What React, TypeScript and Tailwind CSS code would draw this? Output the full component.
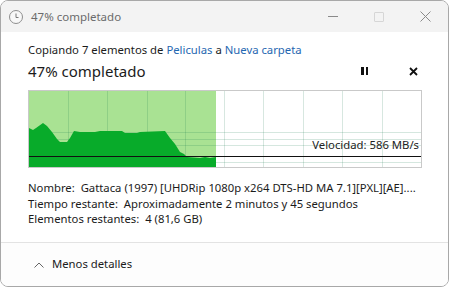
import React from 'react';

const FONT = { fontFamily: '"Noto Sans", "Open Sans", sans-serif' };

// velocity profile in chart-inner coordinates (392 x 76)
const speedPoints = [
  [0, 37], [4, 39], [7, 37], [14, 32], [18, 35], [23, 41], [28, 48], [31, 51],
  [38, 51], [41, 47], [45, 40], [51, 41], [66, 41], [71, 40], [93, 40],
  [96, 42], [108, 42], [111, 41], [136, 40], [141, 47], [146, 53], [151, 61],
  [155, 63], [158, 66], [171, 67], [176, 66], [181, 67], [187, 66], [187, 76], [0, 76],
];

const vLines = [39, 78, 118, 156, 195, 234, 274, 313, 353];
const hLines = [41, 48, 54, 71];

function SpeedChart() {
  const poly = speedPoints.map(([x, y]) => `${x},${y}`).join(' ');
  return (
    <div className="relative mt-[8px] h-[78px] w-[394px] border border-[#c9c9c9] bg-white">
      <svg width="392" height="76" viewBox="0 0 392 76" className="block">
        <rect x="0" y="0" width="187" height="76" fill="#a9e293" />
        {vLines.map((x) => (
          <line key={x} x1={x + 0.5} y1="0" x2={x + 0.5} y2="76" stroke="rgba(20,110,70,0.17)" strokeWidth="1" />
        ))}
        {hLines.map((y) => (
          <line key={y} x1="0" y1={y + 0.5} x2="392" y2={y + 0.5} stroke="rgba(20,120,80,0.18)" strokeWidth="1" />
        ))}
        <polygon points={poly} fill="#08ab2a" />
        <line x1="0" y1="65.5" x2="392" y2="65.5" stroke="#111" strokeWidth="1" />
      </svg>
      <span className="absolute right-[2px] top-[47px] text-[11.3px] leading-[14px] text-[#222]">
        Velocidad: 586 MB/s
      </span>
    </div>
  );
}

export default function App() {
  return (
    <div
      className="flex h-[287px] w-[449px] flex-col overflow-hidden rounded-[8px] border border-[#a8a8a8] bg-white"
      style={FONT}
    >
      {/* Title bar */}
      <div className="flex h-[31px] shrink-0 items-center bg-[#f3f3f3]">
        <svg width="16" height="16" viewBox="0 0 16 16" className="ml-[7px]">
          <circle cx="8" cy="8" r="6.5" fill="#f8f8f8" stroke="#8f8f8f" strokeWidth="1" />
          <path d="M8 4.5V8.5H10.5" fill="none" stroke="#7a7a7a" strokeWidth="1" />
        </svg>
        <span className="ml-[7px] text-[11.5px] text-[#6b6b6b]">47% completado</span>
        <div className="ml-auto flex h-full items-center">
          <div className="flex h-full w-[46px] items-center justify-center">
            <div className="h-px w-[10px] bg-[#8a8a8a]" />
          </div>
          <div className="flex h-full w-[46px] items-center justify-center">
            <div className="h-[10px] w-[10px] rounded-[1px] border border-[#d6d6d6]" />
          </div>
          <div className="flex h-full w-[46px] items-center justify-center">
            <svg width="11" height="11" viewBox="0 0 11 11">
              <path d="M0.5 0.5L10.5 10.5M10.5 0.5L0.5 10.5" stroke="#8a8a8a" strokeWidth="1" />
            </svg>
          </div>
        </div>
      </div>

      {/* Body */}
      <div className="flex-1 px-[27px] pt-[10px]">
        <p className="text-[11.3px] leading-[16px] text-[#1b1b1b]">
          Copiando 7 elementos de <span className="text-[#1f67b1]">Peliculas</span> a{' '}
          <span className="text-[#1f67b1]">Nueva carpeta</span>
        </p>
        <div className="mt-[2px] flex h-[22px] items-center">
          <span className="text-[15px] leading-[22px] text-[#1b1b1b]">47% completado</span>
          <div className="ml-auto flex items-center">
            <div className="flex gap-[2px]">
              <div className="h-[8px] w-[2.5px] bg-[#111]" />
              <div className="h-[8px] w-[2.5px] bg-[#111]" />
            </div>
            <svg width="9" height="9" viewBox="0 0 9 9" className="ml-[41px] mr-[3px]">
              <path d="M1 1L8 8M8 1L1 8" stroke="#111" strokeWidth="1.8" />
            </svg>
          </div>
        </div>

        <SpeedChart />

        <div className="mt-[12px] text-[11.3px] leading-[15.5px] text-[#1b1b1b]">
          <p className="whitespace-nowrap">Nombre:&nbsp; Gattaca (1997) [UHDRip 1080p x264 DTS-HD MA 7.1][PXL][AE]....</p>
          <p>Tiempo restante:&nbsp; Aproximadamente 2 minutos y 45 segundos</p>
          <p>Elementos restantes:&nbsp; 4 (81,6 GB)</p>
        </div>
      </div>

      {/* Footer */}
      <div className="flex h-[44px] shrink-0 items-center border-t border-[#e3e3e3] bg-[#fdfdfd] pl-[33px]">
        <svg width="10" height="6" viewBox="0 0 10 6">
          <path d="M0.5 5.5L5 1L9.5 5.5" fill="none" stroke="#666" strokeWidth="1" />
        </svg>
        <span className="ml-[8px] text-[11.3px] text-[#1b1b1b]">Menos detalles</span>
      </div>
    </div>
  );
}
